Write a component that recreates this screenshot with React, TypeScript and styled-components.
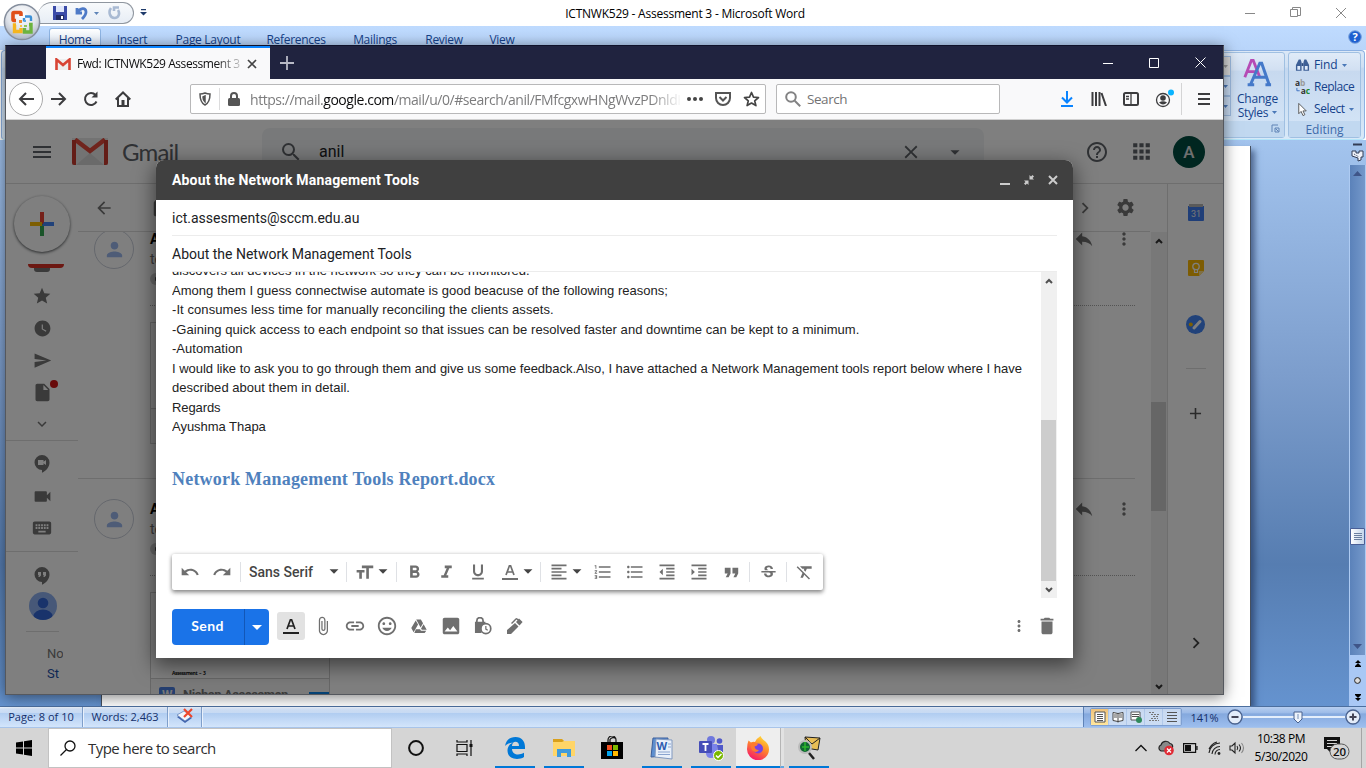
import React from 'react';
import styled, { createGlobalStyle } from 'styled-components';
import {
  MdUndo, MdRedo, MdFormatSize, MdFormatBold, MdFormatItalic, MdFormatUnderlined, MdFormatAlignLeft,
  MdFormatListNumbered, MdFormatListBulleted, MdFormatIndentDecrease, MdFormatIndentIncrease, MdFormatQuote,
  MdFormatClear, MdStrikethroughS, MdArrowDropDown, MdAttachFile, MdLink, MdInsertPhoto,
  MdMoreVert, MdDelete, MdMenu, MdSearch, MdClose, MdHelpOutline, MdApps, MdArrowBack, MdStar, MdWatchLater,
  MdSend, MdInsertDriveFile, MdExpandMore, MdVideocam, MdKeyboard, MdReply, MdSettings, MdChevronRight, MdAdd,
  MdPerson, MdOutlineInsertEmoticon, MdArchive,
} from 'react-icons/md';

const ui = `'Open Sans', 'Noto Sans', sans-serif`;
const roboto = `Roboto, sans-serif`;

const GlobalStyle = createGlobalStyle`
  * { box-sizing: border-box; }
  body { margin: 0; overflow: hidden; font-family: ${ui}; }
  svg { display: block; flex: none; }
`;

const Desktop = styled.div`
  position: relative;
  display: flex;
  flex-direction: column;
  width: 1366px;
  height: 768px;
  overflow: hidden;
  background: #fff;
`;

const Label = styled.span<{ $size?: number; $ls?: number; $color?: string; $ml?: number; $w?: number }>`
  font-size: ${p => p.$size ?? 12}px;
  letter-spacing: ${p => p.$ls ?? 0}px;
  color: ${p => p.$color ?? '#000'};
  margin-left: ${p => p.$ml ?? 0}px;
  width: ${p => (p.$w ? `${p.$w}px` : 'auto')};
  white-space: nowrap;
`;

const Slot = styled.span<{ $w: number; $h?: number; $color?: string; $ml?: number; $push?: 'right' | 'down'; $mb?: number }>`
  display: flex;
  flex: none;
  align-items: center;
  justify-content: center;
  width: ${p => p.$w}px;
  height: ${p => (p.$h ? `${p.$h}px` : 'auto')};
  margin-left: ${p => (p.$push === 'right' ? 'auto' : `${p.$ml ?? 0}px`)};
  margin-top: ${p => (p.$push === 'down' ? 'auto' : '0')};
  margin-bottom: ${p => p.$mb ?? 0}px;
  color: ${p => p.$color ?? 'inherit'};
`;

/* ---------- Word ---------- */

const WordWindow = styled.div`
  display: flex;
  flex-direction: column;
  height: 728px;
`;

const WordTitleBar = styled.div`
  display: flex;
  position: relative;
  justify-content: center;
  height: 26px;
  padding-left: 4px;
  line-height: 27px;
  background: #fff;
`;

const OfficeButton = styled.div`
  position: absolute;
  z-index: 2;
  left: 3px;
  top: 3px;
`;

const QuickAccess = styled.div`
  position: absolute;
  left: 38px;
  top: 2px;
  display: flex;
  align-items: center;
  gap: 8px;
  width: 96px;
  height: 22px;
  padding-left: 15px;
  border: 1px solid #8f969f;
  border-left: none;
  border-radius: 14px 11px 11px 0;
  background: linear-gradient(#f8fafc, #e7edf5);
`;

const QuickMore = styled.div`
  position: absolute;
  left: 140px;
  top: 9px;
`;

const WordControls = styled.div`
  position: absolute;
  right: 2px;
  top: 0;
  display: flex;
  height: 25px;
  align-items: center;
`;

const WordTabs = styled.div`
  position: relative;
  display: flex;
  height: 24px;
  padding: 2px 0 0 49px;
  background: linear-gradient(#bfdbff, #b9d5fa);
`;

const WordTab = styled.div<{ $w: number; $active?: boolean }>`
  width: ${p => p.$w}px;
  text-align: center;
  line-height: 21px;
  font-size: 12px;
  letter-spacing: -0.3px;
  white-space: nowrap;
  color: #15428b;
  border-radius: 3px 3px 0 0;
  border: 1px solid ${p => (p.$active ? '#8fb5e4' : 'transparent')};
  border-bottom: none;
  background: ${p => (p.$active ? 'linear-gradient(#fff, #dce9fa)' : 'none')};
`;

const HelpBadge = styled.div`
  position: absolute;
  right: 4px;
  top: 4px;
`;

const Ribbon = styled.div`
  display: flex;
  justify-content: flex-end;
  gap: 3px;
  height: 90px;
  margin: 0 1px;
  padding: 1px 3px;
  border: 1px solid #8db2e3;
  border-bottom-color: #b4e6fa;
  border-radius: 4px;
  background: linear-gradient(#dbe8f7 0%, #d0e0f3 18%, #c4d8f0 20%, #d8e9f8 100%);
`;

const RibbonGroup = styled.div<{ $w: number }>`
  display: flex;
  flex-direction: column;
  width: ${p => p.$w}px;
  border: 1px solid #a0c0e2;
  border-radius: 3px;
  background: linear-gradient(#e0ebf8 0%, #d2e0f2 20%, #c7d9ef 22%, #d5e6f8 100%);
`;

const GroupBody = styled.div<{ $column?: boolean }>`
  display: flex;
  flex: 1;
  min-height: 0;
  flex-direction: ${p => (p.$column ? 'column' : 'row')};
  padding: ${p => (p.$column ? '1px 0 0 6px' : '3px 0 0 0')};
`;

const GroupFooter = styled.div`
  display: flex;
  flex: none;
  align-items: center;
  justify-content: center;
  height: 16px;
  line-height: 15px;
  background: #c1d8f0;
`;

const GalleryButtons = styled.div`
  display: flex;
  flex-direction: column;
  width: 10px;
  margin-left: 31px;
`;

const GalleryButton = styled.div<{ $off?: boolean }>`
  display: flex;
  align-items: center;
  justify-content: center;
  height: 20px;
  border: 1px solid #9dbbe0;
  background: ${p => (p.$off ? '#d9d9d9' : '#c9dcf3')};
`;

const ChangeStyles = styled.div`
  display: flex;
  flex-direction: column;
  align-items: center;
  gap: 1px;
  width: 54px;
  line-height: 13px;
`;

const RibbonCommand = styled.div<{ $h?: number }>`
  display: flex;
  flex: none;
  align-items: center;
  gap: 4px;
  height: ${p => p.$h ?? 22}px;
  line-height: 16px;
`;

const DocumentArea = styled.div`
  display: flex;
  flex: 1;
  justify-content: flex-end;
  background: linear-gradient(#a3c4ee 0%, #7c9dcc 42%, #567db1 75%, #6593cf 100%);
`;

const Page = styled.div`
  width: 1150px;
  margin-top: 6px;
  background: #fff;
  border: solid #46505f;
  border-width: 0 1px;
  box-shadow: 4px 4px 6px rgba(30, 50, 90, 0.6);
`;

const WordScroll = styled.div`
  display: flex;
  flex-direction: column;
  align-items: center;
  width: 17px;
  margin-left: 98px;
`;

const ScrollTop = styled.div`
  display: flex;
  flex-direction: column;
  align-items: center;
  justify-content: space-between;
  width: 100%;
  height: 25px;
  padding: 3px 0 3px;
`;

const ScrollTrack = styled.div`
  display: flex;
  flex-direction: column;
  align-items: center;
  justify-content: space-between;
  width: 100%;
  height: 490px;
  padding: 6px 0;
  background: linear-gradient(90deg, #5b82ba, #7498ca);
  border: solid #aecbf2;
  border-width: 0 1px;
`;

const ScrollThumb = styled.div`
  display: flex;
  align-items: center;
  justify-content: center;
  width: 15px;
  height: 17px;
  margin-top: 253px;
  border: 1px solid #4a5f97;
  border-radius: 1px;
  background: linear-gradient(90deg, #fff, #c3d4ea);
`;

const BrowseButtons = styled.div`
  display: flex;
  flex: 1;
  flex-direction: column;
  align-items: center;
  justify-content: space-around;
  width: 100%;
  background: #a9c8f5;
`;

const StatusBar = styled.div`
  display: flex;
  height: 22px;
  border-top: 1px solid #4c6f9f;
  border-bottom: 1px solid #a8c4ea;
  background: linear-gradient(#eef4fc 0%, #d3e2f7 10%, #c9dcf5 28%, #b2cef2 32%, #d3e5fb 100%);
`;

const StatusCell = styled.div<{ $w: number }>`
  display: flex;
  align-items: center;
  justify-content: center;
  width: ${p => p.$w}px;
  padding-bottom: 2px;
  border-right: 1px solid #7f9fcb;
  box-shadow: 1px 0 #eaf2fd;
`;

const StatusRight = styled.div`
  display: flex;
  align-items: center;
  width: 283px;
  margin-left: auto;
  padding-left: 6px;
  border-left: 1px solid #5f83b8;
  background: linear-gradient(#b8cff0 0%, #9cbbe8 30%, #85a9de 34%, #9dbeee 100%);
`;

const ViewButtons = styled.div`
  display: flex;
  border: 1px solid #7fa0d2;
  border-radius: 2px;
  background: #c9dbf4;
`;

const ViewButton = styled.div<{ $active?: boolean }>`
  display: flex;
  align-items: center;
  justify-content: center;
  width: 18px;
  height: 16px;
  background: ${p => (p.$active ? 'linear-gradient(#f3c67f, #ffe69d)' : '#cbdcf3')};
  border-right: 1px solid #b1c9ea;
`;

const ZoomTrack = styled.div`
  display: flex;
  align-items: center;
  justify-content: center;
  width: 102px;
  height: 16px;
  padding-left: 8px;
  background: linear-gradient(transparent 7px, #e5effc 7px, #e5effc 9px, transparent 9px);
`;

/* ---------- Firefox ---------- */

const Browser = styled.div`
  position: absolute;
  left: 5px;
  top: 45px;
  display: flex;
  flex-direction: column;
  width: 1219px;
  height: 650px;
  border: 1px solid #55585e;
  border-top-color: #10122a;
  box-shadow: 0 2px 14px rgba(0, 0, 0, 0.5);
  background: #fff;
`;

const BrowserTitle = styled.div`
  display: flex;
  height: 33px;
  flex: none;
  padding-left: 40px;
  background: #20233f;
`;

const BrowserTab = styled.div`
  display: flex;
  align-items: center;
  width: 224px;
  padding: 0 9px;
  border-top: 2px solid #0a84ff;
  background: #f9f9fa;
`;

const TabTitle = styled.span`
  flex: none;
  width: 164px;
  margin: 0 0 0 6px;
  overflow: hidden;
  white-space: nowrap;
  font-size: 12px;
  letter-spacing: -0.44px;
  color: #0c0c0d;
  mask-image: linear-gradient(90deg, #000 138px, transparent 170px);
`;

const BrowserControls = styled.div`
  display: flex;
  align-items: center;
  margin-left: auto;
`;

const NavBar = styled.div`
  display: flex;
  align-items: center;
  flex: none;
  height: 41px;
  padding-left: 3px;
  border-bottom: 1px solid #d0d0d0;
  background: #f9f9fa;
`;

const BackCircle = styled.div`
  display: flex;
  align-items: center;
  justify-content: center;
  width: 34px;
  height: 34px;
  border: 1px solid #a9a9aa;
  border-radius: 50%;
  background: #fff;
`;

const Field = styled.div<{ $w: number; $ml: number }>`
  display: flex;
  flex: none;
  align-items: center;
  width: ${p => p.$w}px;
  height: 30px;
  margin-left: ${p => p.$ml}px;
  border: 1px solid #b8b8b9;
  border-radius: 2px;
  background: #fff;
`;

const Divider = styled.span<{ $h: number; $c?: string }>`
  flex: none;
  width: 1px;
  height: ${p => p.$h}px;
  background: ${p => p.$c ?? '#dcdcdd'};
`;

const Url = styled.span`
  flex: none;
  width: 430px;
  margin-left: 4px;
  overflow: hidden;
  white-space: nowrap;
  font-size: 14px;
  letter-spacing: -0.46px;
  color: #7c7c7d;
  mask-image: linear-gradient(90deg, #000 400px, transparent 432px);
  b { font-weight: 400; color: #0c0c0d; }
`;

/* ---------- Gmail ---------- */

const Gmail = styled.div`
  position: relative;
  display: flex;
  flex: 1;
  flex-direction: column;
  min-height: 0;
  overflow: hidden;
  background: #fff;
  color: #747474;
  font-family: ${roboto};
`;

const Shade = styled.div`
  position: absolute;
  inset: 0;
  background: rgba(0, 0, 0, 0.5);
`;

const GmailHeader = styled.div`
  display: flex;
  align-items: center;
  flex: none;
  height: 64px;
  padding-left: 6px;
  border-bottom: 1px solid #dcdcdc;
`;

const GmailName = styled.span`
  flex: none;
  width: 154px;
  padding-left: 14px;
  font: 400 24px Lato, sans-serif;
  letter-spacing: -0.8px;
  color: #5f6368;
`;

const SearchBox = styled.div`
  display: flex;
  flex: none;
  align-items: center;
  width: 722px;
  height: 48px;
  padding-left: 13px;
  border-radius: 8px;
  background: #f1f3f4;
  color: #5f6368;
`;

const AccountBadge = styled.span`
  width: 32px;
  height: 32px;
  margin-left: 10px;
  border-radius: 50%;
  background: #004d40;
  color: #e0e0e0;
  text-align: center;
  font: 500 17px/33px ${roboto};
`;

const GmailBody = styled.div`
  display: flex;
  flex: 1;
  min-height: 0;
`;

const Rail = styled.nav`
  display: flex;
  flex-direction: column;
  align-items: center;
  flex: none;
  width: 72px;
  overflow: hidden;
`;

const ComposeCircle = styled.div`
  display: flex;
  align-items: center;
  justify-content: center;
  flex: none;
  width: 56px;
  height: 56px;
  margin: 12px 0;
  border-radius: 50%;
  background: #fff;
  box-shadow: 0 1px 3px rgba(60, 64, 67, 0.9);
`;

const InboxSlice = styled.div`
  flex: none;
  width: 36px;
  height: 16px;
  margin-left: 8px;
  i { display: block; height: 4px; border-radius: 0 0 18px 18px; background: #d93025; }
  b { display: block; width: 16px; height: 4px; margin: 0 0 0 6px; border-radius: 0 0 3px 3px; background: #747474; }
`;

const RailItem = styled.div`
  position: relative;
  display: flex;
  align-items: center;
  justify-content: center;
  flex: none;
  width: 72px;
  height: 32px;
`;

const RedDot = styled.i`
  position: absolute;
  left: 44px;
  top: 4px;
  width: 8px;
  height: 8px;
  border-radius: 50%;
  background: #d01414;
`;

const RailLine = styled.div<{ $w?: number; $mb?: number }>`
  flex: none;
  width: ${p => p.$w ?? 72}px;
  height: 1px;
  margin-bottom: ${p => p.$mb ?? 7}px;
  background: #dcdcdc;
`;

const HangoutAvatar = styled.div`
  display: flex;
  align-items: flex-end;
  justify-content: center;
  flex: none;
  width: 28px;
  height: 28px;
  margin-left: 2px;
  overflow: hidden;
  border-radius: 50%;
  background: #8fb1f0;
`;

const RailText = styled.div<{ $color: string; $w: number }>`
  align-self: flex-start;
  flex: none;
  width: ${p => p.$w}px;
  margin-left: 41px;
  overflow: hidden;
  font: 13px/20px ${roboto};
  white-space: nowrap;
  color: ${p => p.$color};
`;

const Main = styled.main`
  display: flex;
  flex: none;
  flex-direction: column;
  width: 1072px;
`;

const MainToolbar = styled.div`
  display: flex;
  align-items: center;
  flex: none;
  height: 48px;
  padding: 0 5px 0 16px;
  border-bottom: 1px solid #dcdcdc;
`;

const Thread = styled.div`
  flex: 1;
  min-height: 0;
  overflow: hidden;
`;

const Message = styled.article<{ $first?: boolean }>`
  display: flex;
  width: 1057px;
  height: 270px;
  margin-top: ${p => (p.$first ? '-24px' : '0')};
  padding-left: 16px;
  border-top: 1px solid #dcdcdc;
`;

const Portrait = styled.div`
  display: flex;
  align-items: center;
  justify-content: center;
  flex: none;
  width: 40px;
  height: 40px;
  margin-top: 20px;
  border: 1px solid #c9ced9;
  border-radius: 50%;
  color: #9cb9ee;
`;

const MessageMain = styled.div`
  display: flex;
  flex-direction: column;
  flex: 1;
  margin-left: 16px;
`;

const MessageTop = styled.div`
  display: flex;
  justify-content: space-between;
  height: 60px;
  padding: 20px 0 0;
  font: 14px/20px ${roboto};
  b { display: block; color: #000; }
`;

const MessageActions = styled.div`
  display: flex;
  gap: 19px;
  padding-right: 1px;
  height: 20px;
  align-items: center;
`;

const Chip = styled.div`
  width: 20px;
  height: 12px;
  margin: 4px 0 20px;
  border-radius: 6px;
  background: radial-gradient(circle at 7px 6px, #555 2px, #cfcfcf 2.5px);
`;

const AttachmentLine = styled.div`
  height: 17px;
  border-top: 1px dotted #a8a8a8;
`;

const Attachment = styled.div`
  display: flex;
  flex-direction: column;
  width: 180px;
  height: 122px;
  border: 1px solid #cfcfcf;
`;

const AttachmentPreview = styled.div`
  display: flex;
  align-items: flex-end;
  flex: none;
  height: 86px;
  padding: 0 0 1px 21px;
  border-bottom: 1px solid #cfcfcf;
  font: 700 5px/7px 'Open Sans', sans-serif;
  letter-spacing: -0.45px;
  word-spacing: 1px;
  color: #111;
`;

const AttachmentName = styled.div`
  display: flex;
  gap: 8px;
  padding: 8px 0 0 8px;
  flex: 1;
  overflow: hidden;
  background: #f5f5f5;
  font: 700 13px/16px ${roboto};
  letter-spacing: -0.45px;
  white-space: nowrap;
`;

const WBox = styled.span`
  width: 16px;
  height: 16px;
  border-radius: 2px;
  background: #4a7fe0;
  color: #eee;
  font: 700 12px/17px ${roboto};
  text-align: center;
`;

const BluePatch = styled.span`
  width: 20px;
  height: 8px;
  margin: 5px 0 0 auto;
  background: #0a84e8;
`;

const Gutter = styled.div<{ $w: number; $track: string }>`
  display: flex;
  flex-direction: column;
  align-items: flex-start;
  flex: none;
  width: ${p => p.$w}px;
  background: ${p => p.$track};
`;

const MailGutter = styled.div`
  display: flex;
  flex: none;
  width: 16px;
  margin-left: 1px;
  padding-top: 48px;
`;

const Thumb = styled.div<{ $top: number; $h: number; $c: string }>`
  align-self: flex-start;
  width: 15px;
  height: ${p => p.$h}px;
  margin-top: ${p => p.$top}px;
  background: ${p => p.$c};
`;

const SidePanel = styled.aside`
  display: flex;
  flex: 1;
  flex-direction: column;
  align-items: center;
  border-left: 1px solid #dcdcdc;
`;

/* ---------- Compose ---------- */

const Compose = styled.section`
  position: absolute;
  left: 156px;
  top: 160px;
  display: flex;
  flex-direction: column;
  width: 917px;
  height: 498px;
  border-radius: 8px 8px 0 0;
  background: #fff;
  box-shadow: 0 6px 20px 2px rgba(0, 0, 0, 0.5);
  font-family: ${roboto};
`;

const ComposeHeader = styled.header`
  display: flex;
  align-items: center;
  height: 40px;
  padding: 0 8px 0 16px;
  border-radius: 8px 8px 0 0;
  background: #404040;
  color: #fff;
  font-weight: 700;
  font-size: 14px;
  letter-spacing: 0.17px;
`;

const HeaderField = styled.div`
  height: 36px;
  margin: 0 16px;
  border-bottom: 1px solid #ececec;
  color: #202124;
  font-size: 14px;
  line-height: 36px;
`;

const ComposeBody = styled.div`
  display: flex;
  height: 326px;
  margin: 0 16px;
`;

const Editor = styled.div`
  display: flex;
  flex: 1;
  flex-direction: column;
  min-width: 0;
`;

const Letter = styled.div`
  height: 282px;
  overflow: hidden;
  font: 13px/19.5px 'Liberation Sans', Arial, sans-serif;
  color: #222;
  white-space: nowrap;
`;

const LetterLine = styled.p<{ $ls: number }>`
  margin: 0;
  letter-spacing: ${p => p.$ls}px;
  &:first-child { margin-top: -11px; }
`;

const Attached = styled.h1`
  margin: 30px 0 0;
  font: 700 18px/24px 'Liberation Serif', serif;
  letter-spacing: 0.2px;
  color: #4f81bd;
`;

const FormatBar = styled.div`
  display: flex;
  align-items: center;
  width: 651px;
  height: 36px;
  padding-left: 2px;
  border-radius: 2px;
  background: #fff;
  color: #6f6f6f;
  box-shadow: 0 1px 4px rgba(0, 0, 0, 0.35), 0 3px 4px rgba(0, 0, 0, 0.25);
`;

const FormatItem = styled.div<{ $w?: number; $pl?: number }>`
  display: flex;
  align-items: center;
  justify-content: ${p => (p.$pl ? 'flex-start' : 'center')};
  flex: none;
  width: ${p => p.$w ?? 32}px;
  padding-left: ${p => p.$pl ?? 0}px;
`;

const FormatSep = styled.div<{ $w?: number }>`
  display: flex;
  justify-content: center;
  flex: none;
  width: ${p => p.$w ?? 4}px;
  &::after { content: ''; width: 1px; height: 20px; background: #dfe1e5; }
`;

const FontName = styled.span`
  width: 77px;
  color: #444;
  font: 500 14px ${roboto};
`;

const SendRow = styled.footer`
  display: flex;
  align-items: center;
  height: 60px;
  padding: 0 12px 4px 16px;
  color: #6f6f6f;
`;

const SendButton = styled.div`
  display: flex;
  width: 97px;
  height: 36px;
  margin: 2px 8px 0 0;
  border-radius: 4px;
  background: #1a73e8;
  color: #fff;
`;

const SendLabel = styled.span`
  width: 73px;
  padding-right: 1px;
  border-right: 1px solid #1257b8;
  text-align: center;
  font: 700 14px/34px Lato, sans-serif;
  letter-spacing: 0.4px;
`;

const ActiveTool = styled.span`
  display: flex;
  align-items: center;
  justify-content: center;
  width: 28px;
  height: 28px;
  margin-right: 2px;
  border-radius: 3px;
  background: #e2e2e2;
  color: #202020;
`;

/* ---------- Taskbar ---------- */

const Taskbar = styled.div`
  display: flex;
  height: 40px;
  background: #d5d5d5;
`;

const TaskSearch = styled.div`
  display: flex;
  align-items: center;
  width: 344px;
  height: 40px;
  padding-left: 11px;
  border: 1px solid #c2c2c2;
  background: #fff;
`;

const TaskButton = styled.div<{ $w: number; $line?: boolean; $active?: boolean }>`
  display: flex;
  flex-direction: column;
  align-items: center;
  justify-content: center;
  width: ${p => p.$w}px;
  height: 40px;
  background-color: ${p => (p.$active ? '#eee' : 'transparent')};
  background-image: ${p => (p.$line ? 'linear-gradient(#0078d7, #0078d7)' : 'none')};
  background-repeat: no-repeat;
  background-position: center bottom;
  background-size: ${p => (p.$active ? '100%' : '40px')} 2px;
`;

const StackEdge = styled.div`
  width: 4px;
  height: 40px;
  border-left: 1px solid #b5b5b5;
  border-bottom: 2px solid #5ea6e2;
  background: #e2e2e2;
`;

const Tray = styled.div`
  display: flex;
  align-items: center;
  margin-left: auto;
`;

const Clock = styled.div`
  width: 66px;
  text-align: center;
  font-size: 12px;
  line-height: 18px;
  letter-spacing: -0.45px;
  white-space: nowrap;
`;

const Arrow = ({ c = '#4a78b8', s = 5 }: { c?: string; s?: number }) => (
  <svg width={s} height={Math.ceil(s / 2)} viewBox="0 0 6 3" preserveAspectRatio="none"><path d="M0 0h6L3 3z" fill={c} /></svg>
);

const Chevron = ({ up, c = '#505050' }: { up?: boolean; c?: string }) => (
  <svg width="8" height="8" viewBox="0 0 8 8"><path d={up ? 'M1 6l3-3 3 3' : 'M1 2l3 3 3-3'} fill="none" stroke={c} strokeWidth="2" /></svg>
);

const OfficeLogo = () => (
  <svg width="38" height="38" viewBox="0 0 38 38">
    <defs>
      <radialGradient id="orb" cx=".5" cy=".3" r=".7"><stop offset="0" stopColor="#fff" /><stop offset=".6" stopColor="#dfe3ea" /><stop offset="1" stopColor="#a9b2c1" /></radialGradient>
    </defs>
    <circle cx="19" cy="19" r="17.6" fill="url(#orb)" stroke="#858e9d" strokeWidth="1.500" />
    <g fill="none">
      <path d="M18 13v-2.500q0-1-1-1h-6q-1 0-1 1v6q0 1 1 1h2" stroke="#e0501a" strokeWidth="3.600" />
      <path d="M22 13.500h5q1 0 1 1V18M21 15v3.500" stroke="#3b8fd6" strokeWidth="2.400" />
      <path d="M13 22h-1.500v6.500H18V25" stroke="#f5b51e" strokeWidth="3.400" />
      <path d="M26 21.500h2V29h-6.500v-4" stroke="#6cb33f" strokeWidth="3.400" />
    </g>
    <path d="M16 17h3v3h-3z" fill="#f08a2e" /><path d="M21 17h2v2h-2z" fill="#5aa5e0" /><path d="M17 22h2v2h-2z" fill="#f6c544" /><path d="M21 22h3v2h-3z" fill="#8cc65c" />
  </svg>
);

const TrayIcons = () => (
  <>
    <Slot $w={24}><svg width="12" height="12" viewBox="0 0 12 12"><path d="M.5 9L6 3.500 11.500 9" fill="none" stroke="#111" strokeWidth="1.300" /></svg></Slot>
    <Slot $w={25}>
      <svg width="18" height="16" viewBox="0 0 18 16">
        <path d="M4 11a3.200 3.200 0 0 1 0-6 5 5 0 0 1 9-1.500 3 3 0 0 1 2.500 4L11 11z" fill="#888" stroke="#222" strokeWidth="1.200" />
        <circle cx="12" cy="10.500" r="4.800" fill="#e02b35" /><path d="M10 8.500l4 4m0-4l-4 4" stroke="#fff" strokeWidth="1.300" />
      </svg>
    </Slot>
    <Slot $w={25}><svg width="15" height="10" viewBox="0 0 15 10"><path d="M.6.600h12v8.800H.6zM14 3v4" fill="none" stroke="#111" strokeWidth="1.200" /><path d="M2 2h6v6H2z" fill="#111" /></svg></Slot>
    <Slot $w={24}>
      <svg width="14" height="14" viewBox="0 0 14 14" fill="none" stroke="#222">
        <path d="M1 12A11 11 0 0 1 12 2M4 13A8 8 0 0 1 12 5.500M7 13.500a5 5 0 0 1 5-5M1 8A13 13 0 0 1 9 1" strokeWidth="1.100" /><circle cx="11" cy="12.500" r="1.400" fill="#222" stroke="none" />
      </svg>
    </Slot>
    <Slot $w={20}>
      <svg width="16" height="14" viewBox="0 0 16 14" fill="none" stroke="#222" strokeWidth="1.100">
        <path d="M1 5h2l3-3v10L3 9H1zM8 5q1.500 2 0 4M10 3.500q3 3.500 0 7" /><path d="M12.500 2q4 5 0 10" stroke="#888" />
      </svg>
    </Slot>
  </>
);

const wordTabs: [string, number][] = [
  ['Home', 52], ['Insert', 62], ['Page Layout', 90], ['References', 86], ['Mailings', 72], ['Review', 66], ['View', 50],
];

function WordRibbon() {
  return (
    <Ribbon>
      <RibbonGroup $w={96}>
        <GroupBody>
          <GalleryButtons>
            <GalleryButton $off><Arrow c="#999" /></GalleryButton>
            <GalleryButton><Arrow /></GalleryButton>
            <GalleryButton><Arrow /></GalleryButton>
          </GalleryButtons>
          <ChangeStyles>
            <svg width="30" height="35" viewBox="0 0 32 34">
              <path d="M3 21L10 3h2l7 18m-13-6h11" fill="none" stroke="#b54bb5" strokeWidth="3" />
              <path d="M9 29L19 6h2l8 23m-16-8h12M6 29h7m12 0h6" fill="none" stroke="#4579c9" strokeWidth="3.200" />
            </svg>
            <Label $color="#15428b" $ls={-0.2}>Change</Label>
            <RibbonCommand $h={13}><Label $color="#15428b" $ls={-0.3}>Styles</Label><Arrow /></RibbonCommand>
          </ChangeStyles>
        </GroupBody>
        <GroupFooter>
          <svg width="90" height="16" viewBox="0 0 90 16"><path d="M80 11V4h6M83 7h4v4h-4z" fill="none" stroke="#5f83b5" /><path d="M83.500 7.500l3 3" stroke="#5f83b5" /></svg>
        </GroupFooter>
      </RibbonGroup>
      <RibbonGroup $w={73}>
        <GroupBody $column>
          <RibbonCommand>
            <svg width="15" height="15" viewBox="0 0 16 15"><path d="M4 1h2l1 3v9H1V7zM10 1h2l3 6v6H9V4z" fill="#3d5f96" /><path d="M2.500 8h3v4h-3zM10.500 8h3v4h-3z" fill="#dfeafa" /><path d="M7 5h2v3H7z" fill="#2a4a80" /></svg>
            <Label $color="#15428b" $ls={-0.1}>Find</Label><Arrow />
          </RibbonCommand>
          <RibbonCommand>
            <svg width="15" height="16" viewBox="0 0 16 16"><text x="0" y="7" fontFamily="Open Sans" fontWeight="700" fontSize="9" fill="#333">a<tspan fill="#9a9a9a">b</tspan></text><text x="6" y="15" fontFamily="Open Sans" fontWeight="700" fontSize="9" fill="#333">a<tspan fill="#1d8a2d">c</tspan></text><path d="M2 9v3h3" fill="none" stroke="#3b6fc0" /></svg>
            <Label $color="#15428b" $ls={-0.5}>Replace</Label>
          </RibbonCommand>
          <RibbonCommand>
            <svg width="15" height="15" viewBox="0 0 16 15"><path d="M4 1v11l2.500-2.500L8.500 14l2-1-2-4h3.500z" fill="#fff" stroke="#555" /></svg>
            <Label $color="#15428b" $ls={-0.4}>Select</Label><Arrow />
          </RibbonCommand>
        </GroupBody>
        <GroupFooter><Label $color="#3e6aaa">Editing</Label></GroupFooter>
      </RibbonGroup>
    </Ribbon>
  );
}

function Word() {
  return (
    <WordWindow>
      <WordTitleBar>
        <OfficeButton><OfficeLogo /></OfficeButton>
        <QuickAccess>
          <svg width="14" height="14" viewBox="0 0 14 14"><path d="M0 0h14v14H0z" fill="#3b4ba8" /><path d="M3 0h8v6H3z" fill="#dfe6fb" /><path d="M3 9h8v5H3z" fill="#222c66" /><path d="M8 10h2v3H8z" fill="#fff" /></svg>
          <svg width="25" height="14" viewBox="0 0 25 14"><path d="M2 2v5h5M2.500 6.500C5 2 11 1 11 6c0 3-1.500 4.500-4 7" fill="none" stroke="#4e7ac7" strokeWidth="2.800" /><path d="M19 6h5l-2.500 3z" fill="#5e84b8" /></svg>
          <svg width="13" height="14" viewBox="0 0 13 14"><path d="M3 2C0 6 2 12 6.500 12S12 7 10 4M6 5V1.500h5" fill="none" stroke="#a9bad3" strokeWidth="2.600" /></svg>
        </QuickAccess>
        <QuickMore><svg width="7" height="7" viewBox="0 0 7 7"><path d="M1 0h5v1.200H1zM0 3h7L3.500 6.500z" fill="#1f3b6b" /></svg></QuickMore>
        <Label $ls={-0.23}>ICTNWK529 - Assessment 3 - Microsoft Word</Label>
        <WordControls>
          <Slot $w={46}><svg width="10" height="10"><path d="M0 5.500h10" stroke="#888" /></svg></Slot>
          <Slot $w={45}><svg width="11" height="11" fill="none" stroke="#888"><path d="M.5 2.500h7v7h-7zM2.500 2.500v-2h8v8h-3" /></svg></Slot>
          <Slot $w={46}><svg width="10" height="10"><path d="M0 0l10 10M10 0L0 10" stroke="#888" /></svg></Slot>
        </WordControls>
      </WordTitleBar>
      <WordTabs>
        {wordTabs.map(([name, w], i) => <WordTab key={name} $w={w} $active={i === 0}>{name}</WordTab>)}
        <HelpBadge>
          <svg width="14" height="14" viewBox="0 0 14 14"><circle cx="7" cy="7" r="6.300" fill="#1d5fd0" stroke="#7ba3dc" /><text x="7" y="11" textAnchor="middle" fontFamily="Open Sans" fontWeight="700" fontSize="11" fill="#fff">?</text></svg>
        </HelpBadge>
      </WordTabs>
      <WordRibbon />
      <DocumentArea>
        <Page />
        <WordScroll>
          <ScrollTop>
            <svg width="9" height="3"><path d="M0 1.500h9" stroke="#333c55" strokeWidth="2" /></svg>
            <svg width="13" height="12" viewBox="0 0 13 12"><path d="M1 1h4v2h3V1h4v6h-2v3l-3 1V8L4 7 1 6z" fill="#eef2fa" stroke="#333c55" /><path d="M3 4l5 3" stroke="#333c55" strokeDasharray="1 1" /></svg>
          </ScrollTop>
          <ScrollTrack>
            <svg width="9" height="5"><path d="M0 5h9L4.500 0z" fill="#3f5588" /></svg>
            <ScrollThumb><svg width="8" height="8"><path d="M0 .5h8M0 2.500h8M0 4.500h8M0 6.500h8" stroke="#6b7f9f" /></svg></ScrollThumb>
            <svg width="9" height="5"><path d="M0 0h9L4.500 5z" fill="#3f5588" /></svg>
          </ScrollTrack>
          <BrowseButtons>
            <svg width="6" height="7"><path d="M0 3l3-3 3 3zM0 6l3-3 3 3zM0 6h6v1H0z" /></svg>
            <svg width="7" height="7"><circle cx="3.500" cy="3.500" r="2.900" fill="#ddd" stroke="#222" /></svg>
            <svg width="6" height="7"><path d="M0 4l3 3 3-3zM0 1l3 3 3-3zM0 0h6v1H0z" /></svg>
          </BrowseButtons>
        </WordScroll>
      </DocumentArea>
      <StatusBar>
        <StatusCell $w={83}><Label $color="#15306b" $size={11}>Page: 8 of 10</Label></StatusCell>
        <StatusCell $w={85}><Label $color="#15306b" $size={11}>Words: 2,463</Label></StatusCell>
        <StatusCell $w={34}>
          <svg width="17" height="16" viewBox="0 0 17 16"><path d="M1 9l7-4 8 5-7 5z" fill="#3f63ad" /><path d="M1 7l7-4 8 5-7 5z" fill="#f3f6fb" stroke="#5d7db5" strokeWidth=".700" /><path d="M8 1l8 8M16 1L8 9" stroke="#f0482c" strokeWidth="2.200" /></svg>
        </StatusCell>
        <StatusRight>
          <ViewButtons>
            <ViewButton $active><svg width="12" height="12"><path d="M1 1h10v10H1z" fill="#fff" stroke="#555" /><path d="M3 3.500h6M3 5.500h6M3 7.500h6M3 9.500h6" stroke="#555" /></svg></ViewButton>
            <ViewButton><svg width="12" height="12"><path d="M1 1.500l5 1 5-1v8l-5 1-5-1zM6 2.500v9" fill="#fff" stroke="#444" /><path d="M2 4h3M2 6h3M7 4h3M7 6h3" stroke="#555" /></svg></ViewButton>
            <ViewButton><svg width="12" height="12"><path d="M1 1h9v8H1z" fill="#fff" stroke="#555" /><path d="M2 3.500h7M2 5.500h7" stroke="#555" /><circle cx="9" cy="9" r="3" fill="#2f8a5b" /></svg></ViewButton>
            <ViewButton><svg width="12" height="12"><path d="M1 1.500h5M3 3.500h8M5 5.500h5M3 7.500h7M1 9.500h10" stroke="#777" strokeDasharray="2 1" /></svg></ViewButton>
            <ViewButton><svg width="12" height="12"><path d="M1 1.500h10M1 4.500h10M1 7.500h10M1 10.500h10" stroke="#555" /></svg></ViewButton>
          </ViewButtons>
          <Slot $w={45}><Label $size={11} $color="#15306b">141%</Label></Slot>
          <svg width="16" height="16" viewBox="0 0 16 16"><circle cx="8" cy="8" r="7" fill="#e3ecf9" stroke="#4a628e" strokeWidth="1.300" /><path d="M4.500 8h7" stroke="#445" strokeWidth="2" /></svg>
          <ZoomTrack><svg width="10" height="13" viewBox="0 0 10 13"><path d="M1 1h8v7l-4 4-4-4z" fill="#edf3fb" stroke="#4a628e" /><path d="M5 3v5" stroke="#7990b5" /></svg></ZoomTrack>
          <svg width="16" height="16" viewBox="0 0 16 16"><circle cx="8" cy="8" r="7" fill="#e3ecf9" stroke="#4a628e" strokeWidth="1.300" /><path d="M4.500 8h7M8 4.500v7" stroke="#445" strokeWidth="2" /></svg>
        </StatusRight>
      </StatusBar>
    </WordWindow>
  );
}

const dark = '#3c3c3e';

function BrowserChrome() {
  return (
    <>
      <BrowserTitle>
        <BrowserTab>
          <svg width="16" height="12" viewBox="0 0 16 12"><path d="M1 1h14v11H1z" fill="#eee" /><path d="M1.500 12V1.500L8 7l6.500-5.500V12" fill="none" stroke="#d84434" strokeWidth="2.600" /></svg>
          <TabTitle>Fwd: ICTNWK529 Assessment 3</TabTitle>
          <Slot $w={22}><svg width="10" height="10"><path d="M1 1l8 8M9 1L1 9" stroke="#444" strokeWidth="1.700" /></svg></Slot>
        </BrowserTab>
        <Slot $w={34}><svg width="14" height="14"><path d="M7 0v14M0 7h14" stroke="#b9bac6" strokeWidth="1.800" /></svg></Slot>
        <BrowserControls>
          <Slot $w={46}><svg width="10" height="10"><path d="M0 5.500h10" stroke="#fff" /></svg></Slot>
          <Slot $w={46}><svg width="10" height="10"><path d="M.5.500h9v9h-9z" fill="none" stroke="#fff" /></svg></Slot>
          <Slot $w={46}><svg width="11" height="11"><path d="M.5.500l10 10m0-10l-10 10" stroke="#fff" /></svg></Slot>
        </BrowserControls>
      </BrowserTitle>
      <NavBar>
        <BackCircle><svg width="16" height="14" fill="none" stroke={dark} strokeWidth="2"><path d="M16 7H2M8 1L2 7l6 6" /></svg></BackCircle>
        <Slot $w={32}><svg width="16" height="14" fill="none" stroke={dark} strokeWidth="2"><path d="M0 7h14M8 1l6 6-6 6" /></svg></Slot>
        <Slot $w={32}><svg width="16" height="16" fill="none" stroke={dark} strokeWidth="2"><path d="M13.500 10.500A6 6 0 1 1 12.500 4" /><path d="M14.500.5v6h-6z" fill={dark} stroke="none" /></svg></Slot>
        <Slot $w={32}><svg width="16" height="16" fill="none" stroke={dark} strokeWidth="2"><path d="M.7 8.500L8 1.500l7.300 7M3 7v8h10V7" /><path d="M6.500 9h3v6h-3z" fill={dark} stroke="none" /></svg></Slot>
        <Field $w={576} $ml={51}>
          <Slot $w={28}><svg width="12" height="14" fill="none" stroke="#555" strokeWidth="1.500"><path d="M1 2q2.500 0 5-1 2.500 1 5 1c0 6-1 9-5 11C2 11 1 8 1 2z" /><path d="M6 4v6q-2-1.500-2-5z" fill="#555" /></svg></Slot>
          <Divider $h={22} />
          <Slot $w={25} $ml={1}><svg width="12" height="14"><path d="M3 6V4a3 3 0 0 1 6 0v2" fill="none" stroke="#555" strokeWidth="2" /><rect y="6" width="12" height="8" rx="1.500" fill="#555" /></svg></Slot>
          <Url>https://mail.<b>google.com</b>/mail/u/0/#search/anil/FMfcgxwHNgWvzPDnldHq</Url>
          <Slot $w={29}><svg width="16" height="4" fill="#444"><circle cx="2" cy="2" r="2" /><circle cx="8" cy="2" r="2" /><circle cx="14" cy="2" r="2" /></svg></Slot>
          <Slot $w={28}><svg width="16" height="14" fill="none" stroke="#555" strokeWidth="2"><path d="M1 1h14v5a7 7 0 0 1-14 0zM4.500 5L8 8.500 11.500 5" /></svg></Slot>
          <Slot $w={28}><svg width="17" height="16" viewBox="0 0 17 16" fill="none" stroke="#444" strokeWidth="1.700"><path d="M8.500 1.500l2 4.600 5 .4-3.800 3.300 1.200 4.800-4.400-2.600-4.400 2.600 1.200-4.800L1.500 6.500l5-.4z" strokeLinejoin="round" /></svg></Slot>
        </Field>
        <Field $w={224} $ml={10}>
          <Slot $w={32}><svg width="16" height="16" fill="none" stroke="#828283" strokeWidth="2"><circle cx="6" cy="6" r="4.800" /><path d="M9.700 9.700l5.500 5.500" /></svg></Slot>
          <Label $size={13.5} $color="#737374" $ls={-0.45} $ml={-2}>Search</Label>
        </Field>
        <Slot $w={32} $ml={51}><svg width="14" height="16" fill="none" stroke="#0a84ff" strokeWidth="2"><path d="M7 0v11M2 6.500l5 5 5-5M1 15h12" /></svg></Slot>
        <Slot $w={32}><svg width="16" height="14" fill="none" stroke={dark} strokeWidth="2"><path d="M1.500 0v14M5 0v14M8.500 0v14M10.500 1l4.500 13" /></svg></Slot>
        <Slot $w={32}><svg width="16" height="14" fill="none" stroke={dark} strokeWidth="2"><rect x="1" y="1" width="14" height="12" rx="1.500" /><path d="M8 1v12M3 4.500h3M3 7h3" strokeWidth="1.300" /></svg></Slot>
        <Slot $w={34}><svg width="20" height="20" viewBox="0 0 20 20"><circle cx="9" cy="11" r="6.500" fill="none" stroke={dark} strokeWidth="1.300" /><circle cx="9" cy="9" r="2.800" fill={dark} /><path d="M5 13.500q4-2.500 8 0-4 4-8 0z" fill={dark} /><circle cx="17" cy="3.500" r="3" fill="#0ab4ff" /></svg></Slot>
        <Divider $h={32} $c="#d4d4d5" />
        <Slot $w={36} $ml={4}><svg width="12" height="12"><path d="M0 1h12M0 6h12M0 11h12" stroke={dark} strokeWidth="2" /></svg></Slot>
      </NavBar>
    </>
  );
}

const HangoutMark = ({ quote }: { quote?: boolean }) => (
  <svg width="16" height="18" viewBox="0 0 16 18">
    <path d="M8 0a7.500 7.500 0 0 0 0 15v2.800C12 16 15.500 12 15.500 7.500A7.500 7.500 0 0 0 8 0z" fill="#747474" />
    {quote
      ? <path d="M4 5h3v3.500L5.500 10H4.300L5 8.200H4zM9 5h3v3.500L10.500 10H9.300L10 8.200H9z" fill="#fff" />
      : <path d="M4 5h5.500v1.800L12 5v5L9.500 8.200V10H4z" fill="#fff" />}
  </svg>
);

function MailMessage({ first }: { first?: boolean }) {
  return (
    <Message $first={first}>
      <Portrait><MdPerson size={23} /></Portrait>
      <MessageMain>
        <MessageTop>
          <div><b>A</b>to</div>
          <MessageActions><MdReply size={22} /><MdMoreVert size={20} /></MessageActions>
        </MessageTop>
        <Chip />
        <AttachmentLine />
        <Attachment>
          <AttachmentPreview>Assessment – 3</AttachmentPreview>
          <AttachmentName><WBox>W</WBox>Nishan Assessmen<BluePatch /></AttachmentName>
        </Attachment>
      </MessageMain>
    </Message>
  );
}

function GmailPage() {
  return (
    <Gmail>
      <GmailHeader>
        <Slot $w={60} $color="#5f6368"><MdMenu size={24} /></Slot>
        <svg width="36" height="27" viewBox="0 0 36 27"><path d="M0 0h36v27H0z" fill="#e6e6e6" /><path d="M4 27l14-12 14 12z" fill="#d5d5d5" /><path d="M3 1.500L18 13 33 1.500" fill="none" stroke="#e0493a" strokeWidth="4.500" /><path d="M0 2h4v25H2q-2 0-2-2zM32 2h4v23q0 2-2 2h-2z" fill="#c93a2e" /></svg>
        <GmailName>Gmail</GmailName>
        <SearchBox>
          <Slot $w={32}><MdSearch size={24} /></Slot>
          <Label $size={16} $color="#202124" $ml={12} $w={575}>anil</Label>
          <Slot $w={34}><MdClose size={22} /></Slot><Slot $w={54}><MdArrowDropDown size={22} /></Slot>
        </SearchBox>
        <Slot $w={44} $ml={91} $color="#5f6368"><MdHelpOutline size={24} /></Slot>
        <Slot $w={44} $color="#5f6368"><MdApps size={25} /></Slot>
        <AccountBadge>A</AccountBadge>
      </GmailHeader>
      <GmailBody>
        <Rail>
          <ComposeCircle><svg width="24" height="24"><path d="M10 0h4v12h-4z" fill="#ea4335" /><path d="M10 12h4v12h-4z" fill="#34a853" /><path d="M0 10h12v4H0z" fill="#fbbc04" /><path d="M14 10h10v4H12z" fill="#4285f4" /></svg></ComposeCircle>
          <InboxSlice><i /><b /></InboxSlice>
          <RailItem><MdStar size={20} /></RailItem>
          <RailItem><MdWatchLater size={19} /></RailItem>
          <RailItem><MdSend size={19} /></RailItem>
          <RailItem><MdInsertDriveFile size={21} /><RedDot /></RailItem>
          <RailItem><MdExpandMore size={18} /></RailItem>
          <RailLine />
          <RailItem><HangoutMark /></RailItem>
          <RailItem><MdVideocam size={21} /></RailItem>
          <RailItem><MdKeyboard size={22} /></RailItem>
          <Slot $w={1} $h={7} />
          <RailLine $mb={8} />
          <RailItem><HangoutMark quote /></RailItem>
          <HangoutAvatar><svg width="28" height="28"><circle cx="14" cy="11" r="5.300" fill="#3367d6" /><ellipse cx="14" cy="24" rx="9.500" ry="6.500" fill="#3367d6" /></svg></HangoutAvatar>
          <Slot $w={1} $h={11} />
          <RailLine $w={33} $mb={12} />
          <RailText $w={16} $color="#777">No</RailText>
          <RailText $w={15} $color="#1a4fa8">St</RailText>
        </Rail>
        <Main>
          <MainToolbar>
            <Slot $w={20}><MdArrowBack size={20} /></Slot>
            <Slot $w={24} $ml={36}><MdArchive size={22} /></Slot>
            <Slot $w={20} $push="right"><MdChevronRight size={22} /></Slot>
            <Slot $w={40} $ml={10}><MdSettings size={21} /></Slot>
          </MainToolbar>
          <Thread><MailMessage first /><MailMessage /></Thread>
        </Main>
        <MailGutter>
          <Gutter $w={16} $track="#f0f0f0">
            <Slot $w={16} $h={17}><Chevron up c="#333" /></Slot>
            <Thumb $top={153} $h={109} $c="#cdcdcd" />
            <Slot $w={16} $h={14} $push="down"><Chevron c="#333" /></Slot>
          </Gutter>
        </MailGutter>
        <SidePanel>
          <Slot $w={55} $h={56}><svg width="16" height="17"><path d="M0 2h16v14q0 1-1 1H1q-1 0-1-1z" fill="#3f7cf0" /><path d="M1 0h14v3H1z" fill="#b5b5b5" /><text x="8" y="13" textAnchor="middle" fontFamily="Roboto" fontSize="9" fill="#eee">31</text></svg></Slot>
          <Slot $w={55} $h={56}><svg width="16" height="16"><path d="M1 0h14q1 0 1 1v10l-5 5H1q-1 0-1-1V1q0-1 1-1z" fill="#fbb904" /><path d="M11 16v-5h5z" fill="#ffe08a" /><circle cx="8" cy="6.500" r="3.200" fill="none" stroke="#fff" strokeWidth="1.300" /><path d="M6.500 10v2.500h3V10" fill="none" stroke="#fff" strokeWidth="1.200" /></svg></Slot>
          <Slot $w={55} $h={56}><svg width="19" height="19"><circle cx="9.500" cy="9.500" r="9.500" fill="#4285f4" /><path d="M8 13l6-6.500" stroke="#fff" strokeWidth="3" strokeLinecap="round" /><circle cx="4.800" cy="9.500" r="2" fill="#fbbc04" /></svg></Slot>
          <Slot $w={55} $h={16} /><RailLine $w={20} $mb={35} />
          <MdAdd size={19} color="#555" />
          <Slot $w={54} $h={36} $push="down" $mb={33}><MdChevronRight size={22} color="#444" /></Slot>
        </SidePanel>
      </GmailBody>
      <Shade />
    </Gmail>
  );
}

const letter: [string, number][] = [
  ['discovers all devices in the network so they can be monitored.', 0.01],
  ['Among them I guess connectwise automate is good beacuse of the following reasons;', 0.02],
  ['-It consumes less time for manually reconciling the clients assets.', 0.08],
  ['-Gaining quick access to each endpoint so that issues can be resolved faster and downtime can be kept to a minimum.', 0.045],
  ['-Automation', 0.03],
  ['I would like to ask you to go through them and give us some feedback.Also, I have attached a Network Management tools report below where I have', -0.02],
  ['described about them in detail.', 0.03],
  ['Regards', -0.1],
  ['Ayushma Thapa', -0.03],
];

const Drop = () => <MdArrowDropDown size={16} color="#444" viewBox="3 4 18 18" />;
const TextColor = ({ c = '#6f6f6f' }: { c?: string }) => (
  <svg width="16" height="16" viewBox="0 0 16 16"><path d="M4 11L7.400 1.800h1.200L12 11M5.200 8h5.600" fill="none" stroke={c} strokeWidth="1.700" /><path d="M0 14h16v2H0z" fill={c} /></svg>
);

function ComposeWindow() {
  return (
    <Compose>
      <ComposeHeader>
        About the Network Management Tools
        <Slot $w={24} $push="right"><svg width="10" height="10"><path d="M0 9h10" stroke="#ccc" strokeWidth="2" /></svg></Slot>
        <Slot $w={24}><svg width="10" height="10" fill="#ccc"><path d="M5.500 4.500V0l1.500 1.500L8.500 0 10 1.500 8.500 3 10 4.500zM4.500 5.500V10L3 8.500 1.500 10 0 8.500 1.500 7 0 5.500z" /></svg></Slot>
        <Slot $w={24}><svg width="10" height="10"><path d="M1 1l8 8m0-8L1 9" stroke="#ccc" strokeWidth="2" /></svg></Slot>
      </ComposeHeader>
      <HeaderField>ict.assesments@sccm.edu.au</HeaderField>
      <HeaderField>About the Network Management Tools</HeaderField>
      <ComposeBody>
        <Editor>
          <Letter>
            {letter.map(([line, ls]) => <LetterLine key={line} $ls={ls}>{line}</LetterLine>)}
            <Attached>Network Management Tools Report.docx</Attached>
          </Letter>
          <FormatBar>
            <FormatItem><MdUndo size={20} /></FormatItem>
            <FormatItem><MdRedo size={20} /></FormatItem>
            <FormatSep />
            <FormatItem $w={102} $pl={7}><FontName>Sans Serif</FontName><Drop /></FormatItem>
            <FormatSep />
            <FormatItem $w={46} $pl={6}><MdFormatSize size={21} /><Drop /></FormatItem>
            <FormatSep />
            <FormatItem><MdFormatBold size={21} /></FormatItem>
            <FormatItem><MdFormatItalic size={21} /></FormatItem>
            <FormatItem><MdFormatUnderlined size={20} /></FormatItem>
            <FormatItem $w={44} $pl={8}><TextColor /><Slot $w={20}><Drop /></Slot></FormatItem>
            <FormatSep />
            <FormatItem $w={45} $pl={7}><MdFormatAlignLeft size={20} /><Drop /></FormatItem>
            <FormatItem><MdFormatListNumbered size={20} /></FormatItem>
            <FormatItem><MdFormatListBulleted size={20} /></FormatItem>
            <FormatItem><MdFormatIndentDecrease size={20} /></FormatItem>
            <FormatItem><MdFormatIndentIncrease size={20} /></FormatItem>
            <FormatItem><MdFormatQuote size={23} /></FormatItem>
            <FormatSep $w={5} />
            <FormatItem><MdStrikethroughS size={19} /></FormatItem>
            <FormatSep $w={5} />
            <FormatItem><MdFormatClear size={20} /></FormatItem>
          </FormatBar>
        </Editor>
        <Gutter $w={16} $track="#f0f0f0">
          <Slot $w={15} $h={17}><Chevron up /></Slot>
          <Thumb $top={131} $h={161} $c="#cdcdcd" />
          <Slot $w={15} $h={17}><Chevron /></Slot>
        </Gutter>
      </ComposeBody>
      <SendRow>
        <SendButton><SendLabel>Send</SendLabel><Slot $w={24}><MdArrowDropDown size={16} viewBox="4 4 16 16" /></Slot></SendButton>
        <ActiveTool><TextColor c="#202020" /></ActiveTool>
        <Slot $w={32}><MdAttachFile size={20} /></Slot>
        <Slot $w={32}><MdLink size={22} /></Slot>
        <Slot $w={32}><MdOutlineInsertEmoticon size={22} /></Slot>
        <Slot $w={32}><svg width="16" height="15" viewBox="0 0 17 15" fill="#6f6f6f"><path d="M5.500 0h5l2.300 4-2.600 4.500z M5 1L.3 9l2.500 4.500L7.500 5.400zM13.400 5.200L16.700 11h-5.200L10.700 9.700zM5.200 10.300h4.400l1 1.700h5.600L14.500 14.500h-11z" /></svg></Slot>
        <Slot $w={32}><MdInsertPhoto size={22} /></Slot>
        <Slot $w={32}><svg width="18" height="18" viewBox="0 0 19 19"><path d="M3 6V4a3.300 3.300 0 0 1 6.600 0v2" fill="none" stroke="#6f6f6f" strokeWidth="1.800" /><path d="M1 5h11v3a6 6 0 0 0-4 9H1z" fill="#6f6f6f" /><circle cx="12.500" cy="12.300" r="5.200" fill="#fff" stroke="#6f6f6f" strokeWidth="1.800" /><path d="M12.500 9.500v3.300l2 1.200" fill="none" stroke="#6f6f6f" strokeWidth="1.300" /></svg></Slot>
        <Slot $w={32}><svg width="16" height="16" viewBox="0 0 16 16" fill="#6f6f6f"><path d="M8 5l3.500 3.500L4 16H0v-4zM9 4l1.500-1.500L9.500 1.500 5 6 4 5l4.500-4.500q1-1 2 0l.8.800L12 .600l3.600 3.400L12.500 7.500z" /></svg></Slot>
        <Slot $w={28} $push="right"><MdMoreVert size={18} /></Slot>
        <Slot $w={28}><MdDelete size={22} /></Slot>
      </SendRow>
    </Compose>
  );
}

function TaskbarStrip() {
  return (
    <Taskbar>
      <Slot $w={48}><svg width="16" height="16"><path d="M0 2.500L7 1.500V7.500H0zM8 1.300L16 0v7.500H8zM0 8.500h7v6L0 13.500zM8 8.500h8V16l-8-1.200z" /></svg></Slot>
      <TaskSearch>
        <svg width="16" height="16" fill="none" stroke="#111" strokeWidth="1.300"><circle cx="10" cy="6" r="5" /><path d="M6.500 9.500L.5 15.500" /></svg>
        <Label $size={15} $color="#2f2f2f" $ls={-0.54} $ml={12}>Type here to search</Label>
      </TaskSearch>
      <TaskButton $w={48}><svg width="16" height="16"><circle cx="8" cy="8" r="6.900" fill="none" stroke="#111" strokeWidth="2" /></svg></TaskButton>
      <TaskButton $w={49}><svg width="17" height="16" fill="none" stroke="#111" strokeWidth="1.200"><path d="M1 4.500h10v7H1zM1 0v2h10V0M1 16v-2h10v2M15 0v4M15 7v9" /><path d="M13.500 4h3v3h-3z" fill="#111" stroke="none" /></svg></TaskButton>
      <TaskButton $w={51} $line>
        <svg width="20" height="22" viewBox="0 0 20 22"><path d="M0 9C1 3 5 0 10.500 0 17 0 20 4.500 20 10v2H7c.2 4 3 5.500 6 5.500 2 0 4-.500 6-1.700v4.300C17 21.500 14.500 22 12 22 6 22 2.500 18.500 2.500 13.500 2.500 10 4.500 7 8 5.500 5 5.700 2 7 0 9zm7 0h7c0-3-1.500-4.300-3.500-4.300S7.300 6 7 9z" fill="#0078d7" /></svg>
      </TaskButton>
      <TaskButton $w={47} $line>
        <svg width="22" height="18" viewBox="0 0 22 18"><path d="M0 0h9l2 2h11v15H0z" fill="#ffd567" /><path d="M0 0h9l2 2-2 1H0z" fill="#d9a01c" /><path d="M4 10h14v8h-4v-4H8v4H4z" fill="#3f9bdc" /></svg>
      </TaskButton>
      <TaskButton $w={50}>
        <svg width="24" height="24" viewBox="0 0 24 24"><path d="M1 6h22v17H1z" /><path d="M8 6V4a4 4 0 0 1 8 0v2M10 6V3.500a4 4 0 0 1 6-1" fill="none" stroke="#111" strokeWidth="1.200" /><path d="M7 9h5v5H7z" fill="#f25022" /><path d="M13 9h5v5h-5z" fill="#7fba00" /><path d="M7 15h5v5H7z" fill="#00a4ef" /><path d="M13 15h5v5h-5z" fill="#ffb900" /></svg>
      </TaskButton>
      <TaskButton $w={49} $line>
        <svg width="24" height="24" viewBox="0 0 24 24"><path d="M3 2h15l-2 18-15 1z" fill="#5d8fd0" stroke="#3d5f9b" /><path d="M6 3l16 1v19l-17-2z" fill="#e9f0fa" stroke="#8199c0" /><path d="M8 16h12M8 18.500h12M18 8h3M18 11h3" stroke="#8aa4cf" /><text x="6.500" y="14" fontFamily="Open Sans" fontWeight="700" fontSize="11" fill="#2d5cb0">W</text></svg>
      </TaskButton>
      <TaskButton $w={50} $line>
        <svg width="26" height="26" viewBox="0 0 26 26"><circle cx="13" cy="5" r="4" fill="#6f78dd" /><circle cx="21.500" cy="6" r="2.800" fill="#5059c9" /><path d="M8 9h11v9q-1 5-6 5t-5-5z" fill="#7b83eb" /><path d="M19 10h6v7q-1 3-5 3z" fill="#5059c9" /><rect x="1" y="6" width="13" height="12" rx="1" fill="#464eb8" /><path d="M4.500 9h6M7.500 9v7" stroke="#fff" strokeWidth="1.800" /><circle cx="20.500" cy="20.500" r="5" fill="#7ab800" stroke="#fff" /><path d="M18 20.500l2 2 3.500-3.500" fill="none" stroke="#fff" strokeWidth="1.500" /></svg>
      </TaskButton>
      <TaskButton $w={44} $line $active>
        <svg width="24" height="24" viewBox="0 0 24 24"><defs><linearGradient id="fox" x1=".8" y1="0" x2=".3" y2="1"><stop offset="0" stopColor="#ffe33b" /><stop offset=".45" stopColor="#ff8a2a" /><stop offset="1" stopColor="#f5156c" /></linearGradient></defs><path d="M2.500 4.500l2.500 2q2-1 4-.500Q11 2 14.500 0q1 3 5 5.500 3.500 3 3.500 8A11 11 0 0 1 1 13q0-5 1.500-8.500z" fill="url(#fox)" /><circle cx="12" cy="12.500" r="5" fill="#7542e5" /><path d="M5 7q4-2 7 1-1 2-3.500 2.500Q9 14 13 14q-3 4-7 0-2-3-1-7z" fill="#ff7a2e" /></svg>
      </TaskButton>
      <StackEdge />
      <TaskButton $w={49} $line>
        <svg width="24" height="26" viewBox="0 0 24 26"><path d="M8 2l15 1-2 12-12-2z" fill="#e8bd55" stroke="#222" /><path d="M8 2l7 7 8-6" fill="none" stroke="#222" /><circle cx="8" cy="12" r="6" fill="#163" stroke="#bbb" strokeWidth="2" /><path d="M5 12h7M8 7v9" stroke="#2db52d" strokeWidth="1.500" /><path d="M12 18l5 6" stroke="#222" strokeWidth="2.500" /></svg>
      </TaskButton>
      <Tray>
        <TrayIcons />
        <Slot $w={1} />
        <Clock>10:38 PM<br />5/30/2020</Clock>
        <Slot $w={46}>
          <svg width="28" height="24" viewBox="0 0 28 24"><path d="M1 1h16v12H7v3l-3-3H1z" fill="#111" /><path d="M4 4.500h10M4 7.500h10M4 10.500h6" stroke="#d5d5d5" /><rect x="7" y="8" width="19" height="15" rx="7.500" fill="#d5d5d5" stroke="#555" /><text x="16.500" y="19.700" textAnchor="middle" fontFamily="Open Sans" fontWeight="600" fontSize="11.500" fill="#111">20</text></svg>
        </Slot>
        <Slot $w={1} /><Divider $h={40} $c="#a5a5a5" /><Slot $w={4} />
      </Tray>
    </Taskbar>
  );
}

export default function App() {
  return (
    <>
      <GlobalStyle />
      <Desktop>
        <Word />
        <TaskbarStrip />
        <Browser>
          <BrowserChrome />
          <GmailPage />
        </Browser>
        <ComposeWindow />
      </Desktop>
    </>
  );
}
